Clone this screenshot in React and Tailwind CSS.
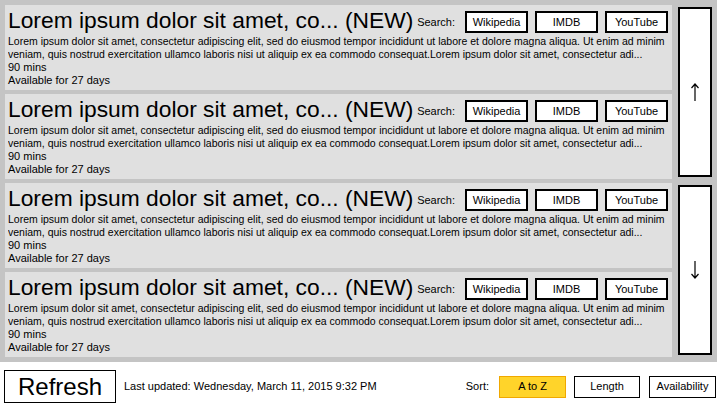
import React from "react";

const lorem =
  "Lorem ipsum dolor sit amet, consectetur adipiscing elit, sed do eiusmod tempor incididunt ut labore et dolore magna aliqua. Ut enim ad minim veniam, quis nostrud exercitation ullamco laboris nisi ut aliquip ex ea commodo consequat.Lorem ipsum dolor sit amet, consectetur adi...";

const shows = [1, 2, 3, 4].map((id) => ({
  id,
  title: "Lorem ipsum dolor sit amet, co... (NEW)",
  description: lorem,
  length: "90 mins",
  available: "Available for 27 days",
}));

// thin arrow used by the scroll buttons
function Arrow({ down }) {
  return (
    <svg width="10" height="20" viewBox="0 0 10 20" className={down ? "rotate-180" : ""}>
      <path d="M5 2 L5 19 M1.5 6 L5 2 L8.5 6" stroke="black" strokeWidth="1.2" fill="none" />
    </svg>
  );
}

// one programme row
function ShowItem({ show }) {
  return (
    <div className="h-[85px] bg-[#e0e0e0] pl-[3px] pr-[4px] overflow-hidden">
      <div className="flex items-center h-[30px]">
        <div className="text-[22.8px] leading-[28px] text-black whitespace-nowrap">{show.title}</div>
        <div className="ml-auto flex items-center gap-[7px] pt-[4px]">
          <span className="text-[11px] mr-[3px]">Search:</span>
          {["Wikipedia", "IMDB", "YouTube"].map((s) => (
            <button
              key={s}
              className="w-[63px] h-[22px] bg-white border-2 border-black text-[11px] leading-none"
            >
              {s}
            </button>
          ))}
        </div>
      </div>
      <p className="text-[10.5px] leading-[13px] text-black line-clamp-2">{show.description}</p>
      <p className="text-[11px] leading-[13px] text-black">{show.length}</p>
      <p className="text-[11px] leading-[13px] text-black">{show.available}</p>
    </div>
  );
}

function App() {
  return (
    <div className="w-[720px] h-[408px] bg-white font-['Liberation_Sans',Arial,sans-serif] text-black">
      {/* Lista de programas */}
      <div className="h-[362px] w-[717px] bg-[#c4c4c4] flex gap-[6px] p-[5px]">
        <div className="w-[668px] flex flex-col gap-[4px]">
          {shows.map((show) => (
            <ShowItem key={show.id} show={show} />
          ))}
        </div>
        <div className="w-[34px] flex flex-col gap-[8px] pt-[2px] pb-[2px]">
          <button className="flex-1 bg-white border-2 border-black flex items-center justify-center">
            <Arrow />
          </button>
          <button className="flex-1 bg-white border-2 border-black flex items-center justify-center">
            <Arrow down />
          </button>
        </div>
      </div>

      {/* Barra inferior */}
      <div className="h-[46px] flex items-center pl-[4px] pr-[4px] pt-[3px]">
        <button className="w-[112px] h-[33px] border border-black bg-white text-[24px] leading-none">
          Refresh
        </button>
        <span className="ml-[8px] text-[11px]">Last updated: Wednesday, March 11, 2015 9:32 PM</span>
        <span className="ml-auto text-[11px] mr-[10px]">Sort:</span>
        <button className="w-[67px] h-[22px] bg-[#ffd42a] border border-[#f0a800] text-[11px]">A to Z</button>
        <button className="ml-[8px] w-[66px] h-[22px] bg-white border border-black text-[11px]">Length</button>
        <button className="ml-[9px] w-[67px] h-[22px] bg-white border border-black text-[11px]">Availability</button>
      </div>
    </div>
  );
}

export default App;
